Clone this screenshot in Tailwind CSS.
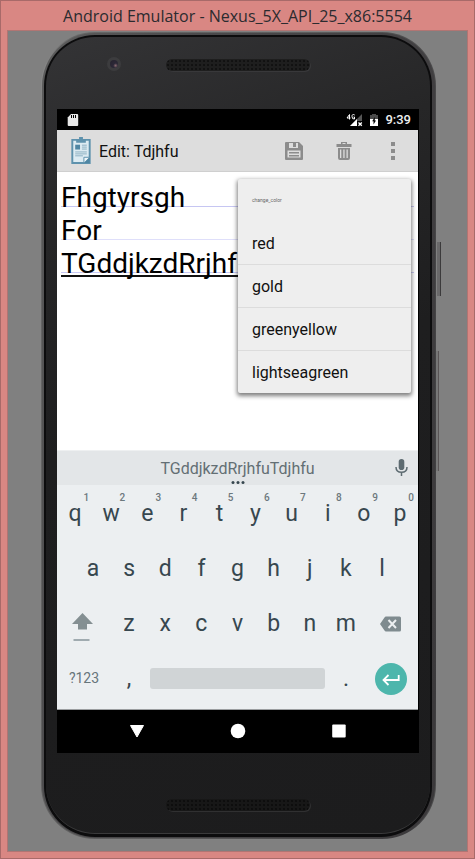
<!DOCTYPE html>
<html lang="en">
<head>
<meta charset="utf-8">
<meta name="viewport" content="width=device-width, initial-scale=1">
<title>Android Emulator - Nexus_5X_API_25_x86:5554</title>
<script src="https://cdn.jsdelivr.net/npm/@tailwindcss/browser@4"></script>
</head>
<body class="font-['Roboto',sans-serif]">
<div class="flex min-h-screen flex-col border border-[#a86a69] bg-[#d98783] px-[6px] pb-[6px]">
  <h1 class="h-[29px] pt-[2px] text-center font-['Open_Sans',sans-serif] text-[16px] leading-[26px] whitespace-nowrap text-[#2b2b2f]">Android Emulator - Nexus_5X_API_25_x86:5554</h1>
  <main class="flex flex-1 flex-col border border-[#b17573] bg-[#808080] pt-px pr-[31px] pb-[12px] pl-[33px]">
    <!-- Phone body -->
    <div class="relative flex flex-1 flex-col rounded-[54px] bg-[linear-gradient(100deg,#949494_0%,#666_6%,#5c5c5c_50%,#3c3b3d_95%,#555_100%)] p-px">
      <span class="absolute top-[210px] -right-[5px] h-[54px] w-[4px] border-r border-[#3b3a3b] bg-[#6a696a]"></span>
      <span class="absolute top-[319px] -right-[3px] h-[120px] w-[3px] border-r border-[#5a5556] bg-[#777]"></span>
      <div class="flex flex-1 flex-col rounded-[53px] bg-[linear-gradient(100deg,#5c5c5c_0%,#4a494b_30%,#3a383a_100%)] pt-[2px] pr-[3px] pb-px pl-[2px]">
      <div class="flex flex-1 flex-col rounded-[51px] bg-[#0c0c0d] pt-[2px] pr-[2px] pb-[3px] pl-[2px]">
      <div class="flex flex-1 flex-col rounded-[49px] border-b border-[#3a3a3b] bg-[linear-gradient(160deg,#343436_0%,#262627_22%,#1e1e1f_45%,#1c1c1d_100%)] pr-[11px] pl-[11px]">
        <div class="relative flex h-[72px] justify-center pt-[22px]">
          <span class="absolute top-[20px] left-[50px] flex size-[14px] items-center justify-center rounded-full bg-[#3c3c3e]"><span class="size-[8px] rounded-full bg-[radial-gradient(circle_at_70%_70%,#8a6a70_0,#2c2837_30%,#24212c_100%)]"></span></span>
          <span class="h-[12px] w-[144px] rounded-full bg-[#1e1e1e] bg-[radial-gradient(circle,#0a0a0a_0.5px,transparent_1px)] bg-size-[4px_4px] shadow-[1px_1px_0_#38383a]"></span>
        </div>
        <!-- Screen -->
        <div class="flex flex-1 flex-col bg-black pr-px">
          <header class="flex h-[21px] items-center pr-[7px] pl-[10px] text-white">
            <svg class="h-[14px] w-[12px]" viewBox="0 0 12 14" aria-hidden="true"><path fill="#e8e8e8" d="M4 1h6.2q1 0 1 1v10q0 1-1 1H1.700q-1 0-1-1V4.500z"/><path stroke="#000" d="M4.500 2v3M6.500 2v3M8.500 2v3"/></svg>
            <svg class="ml-auto h-[14px] w-[17px]" viewBox="0 0 17 14" aria-hidden="true"><path fill="#555" d="M16 1v12H4z"/><path fill="#fff" d="M11 6v7H4z"/><path fill="#000" d="M11 8h6v6h-6z"/><path stroke="#fff" stroke-width="1.300" d="m12.500 9.500 3.300 3.300m0-3.300-3.300 3.300"/><path fill="none" stroke="#fff" d="M3.500 6.500v-5l-2.500 3.500h3.500M8.700 2Q6 .5 6 3.500T8.500 6V4H7.500"/></svg>
            <svg class="ml-[6px] h-[14px] w-[10px]" viewBox="0 0 10 14" aria-hidden="true"><path fill="#4a4a4a" d="M1 2h2V1h4v1h2v4H1z"/><path fill="#fff" d="M1 6h8v7H1z"/><path fill="#000" d="M5.800 4v3.500H7L4.500 11.500V8.300H3.200z"/></svg>
            <span class="ml-[6px] text-[13px] leading-[20px] font-medium text-[#eee]">9:39</span>
          </header>
          <div class="flex h-[42px] items-center border-b border-[#cfcfcf] bg-[#dddddd] pl-[13px]">
            <svg class="h-[29px] w-[22px]" viewBox="0 0 22 30" aria-hidden="true"><path fill="#dcebf2" stroke="#5e92ad" stroke-width="2" d="M2 4h18v24H2z"/><path fill="#5e92ad" d="M6 3h3V1h4v2h3v4H6z"/><path fill="#4f86a3" d="M5 9h5v5H5z"/><path stroke="#8cb0c2" d="M12 9.500h5M12 11.500h5M12 13.500h5M5 16.500h12M5 18.500h12M5 20.500h8"/><path fill="#4f86a3" d="M20 22v6h-6z"/><path fill="#eef5f8" stroke="#5e92ad" d="M14 28v-6h6z"/></svg>
            <h2 class="ml-[7px] flex-1 pt-[2px] text-[16px] leading-[20px] text-[#111]">Edit: Tdjhfu</h2>
            <button class="flex h-[41px] w-[50px] items-center justify-center" aria-label="Save"><svg class="size-[18px]" viewBox="0 0 18 18"><path fill="#8c8c8c" fill-rule="evenodd" d="M1 0h13l4 4v13q0 1-1 1H1q-1 0-1-1V1q0-1 1-1zM4 1v5h9V1zM2.500 8.500V15.500h13V8.500z"/><path fill="#8c8c8c" d="M8 1h3v4H8zM4 10h10v1.500H4zM4 13h10v1.500H4z"/></svg></button>
            <button class="flex h-[41px] w-[49px] items-center justify-center" aria-label="Delete"><svg class="h-[18px] w-[16px]" viewBox="0 0 16 18"><path fill="#8c8c8c" fill-rule="evenodd" d="M5 0h6v2h4.500v3H.5V2H5zm1.500 1v1h3V1zM2 6h12v10q0 2-2 2H4q-2 0-2-2zm2 1.500v8.500h1.300V7.500zm3.300 0V16h1.300V7.500zm3.200 0V16h1.300V7.500z"/></svg></button>
            <button class="flex h-[41px] w-[50px] items-center justify-center" aria-label="More options"><svg class="h-[18px] w-[4px]" viewBox="0 0 4 18"><path fill="#8c8c8c" d="M0 0h4v4H0zM0 7h4v4H0zM0 14h4v4H0z"/></svg></button>
          </div>
          <!-- Note being edited -->
          <div class="relative flex min-h-[278px] flex-1 flex-col bg-white px-[4px] pt-[2px]">
            <div class="absolute inset-x-[4px] top-[2px] flex flex-col" aria-hidden="true">
              <span class="h-[33px] border-b border-[#c6c6f2]"></span>
              <span class="h-[33px] border-b border-[#dfdffa]"></span>
              <span class="h-[33px] border-b border-[#c9c9f4]"></span>
              <span class="mt-[2px] mr-[160px] h-[2px] bg-[#111]"></span>
            </div>
            <textarea aria-label="Note" spellcheck="false" class="relative block w-full flex-1 resize-none overflow-hidden bg-transparent pt-[7px] text-[28px] leading-[33px] text-black outline-none">Fhgtyrsgh
For
TGddjkzdRrjhfu</textarea>
            <div role="menu" aria-label="change_color" class="absolute top-[7px] right-[7px] w-[173px] rounded-[2px] bg-[#eeeeee] text-[16px] leading-[20px] text-[#111] shadow-[0_2px_4px_1px_rgba(0,0,0,0.5)]">
              <p class="h-[43px] px-[14px] text-[5px] leading-[43px] text-[#666]">change_color</p>
              <button role="menuitem" class="block h-[43px] w-full border-b border-[#dcdcdc] px-[14px] pt-[2px] text-left">red</button>
              <button role="menuitem" class="block h-[43px] w-full border-b border-[#dcdcdc] px-[14px] pt-[2px] text-left">gold</button>
              <button role="menuitem" class="block h-[43px] w-full border-b border-[#dcdcdc] px-[14px] pt-[2px] text-left">greenyellow</button>
              <button role="menuitem" class="block h-[42px] w-full px-[14px] pt-[2px] text-left">lightseagreen</button>
            </div>
          </div>
          <!-- Keyboard -->
          <div class="border-b border-[#9b9ea0] bg-[#eceff1] text-[#37474f]">
            <div class="relative mb-px flex h-[35px] items-center justify-center border-t border-[#eef0f1] bg-[#e3e6e8]">
              <button class="pt-[2px] text-[16px] leading-[20px] text-[#636f74]">TGddjkzdRrjhfuTdjhfu</button>
              <span class="absolute bottom-px left-1/2 flex -translate-x-1/2 gap-[2px]"><i class="size-[3px] rounded-full bg-[#37474f]"></i><i class="size-[3px] rounded-full bg-[#37474f]"></i><i class="size-[3px] rounded-full bg-[#37474f]"></i></span>
              <button class="absolute top-[8px] right-[10px]" aria-label="Voice input"><svg class="h-[18px] w-[13px]" viewBox="0 0 13 18"><rect x="3.700" y="0" width="5.600" height="11" rx="2.800" fill="#5d6b71"/><path fill="none" stroke="#5d6b71" stroke-width="1.500" d="M1 8q0 5.300 5.500 5.300T12 8M6.500 13v4"/></svg></button>
            </div>
            <div class="flex h-[55px] text-[23px] leading-[55px]">
              <button class="relative flex-1">q<sup class="absolute top-[6px] right-[4px] text-[10px] leading-[12px] font-medium text-[#6c787d]">1</sup></button>
              <button class="relative flex-1">w<sup class="absolute top-[6px] right-[4px] text-[10px] leading-[12px] font-medium text-[#6c787d]">2</sup></button>
              <button class="relative flex-1">e<sup class="absolute top-[6px] right-[4px] text-[10px] leading-[12px] font-medium text-[#6c787d]">3</sup></button>
              <button class="relative flex-1">r<sup class="absolute top-[6px] right-[4px] text-[10px] leading-[12px] font-medium text-[#6c787d]">4</sup></button>
              <button class="relative flex-1">t<sup class="absolute top-[6px] right-[4px] text-[10px] leading-[12px] font-medium text-[#6c787d]">5</sup></button>
              <button class="relative flex-1">y<sup class="absolute top-[6px] right-[4px] text-[10px] leading-[12px] font-medium text-[#6c787d]">6</sup></button>
              <button class="relative flex-1">u<sup class="absolute top-[6px] right-[4px] text-[10px] leading-[12px] font-medium text-[#6c787d]">7</sup></button>
              <button class="relative flex-1">i<sup class="absolute top-[6px] right-[4px] text-[10px] leading-[12px] font-medium text-[#6c787d]">8</sup></button>
              <button class="relative flex-1">o<sup class="absolute top-[6px] right-[4px] text-[10px] leading-[12px] font-medium text-[#6c787d]">9</sup></button>
              <button class="relative flex-1">p<sup class="absolute top-[6px] right-[4px] text-[10px] leading-[12px] font-medium text-[#6c787d]">0</sup></button>
            </div>
            <div class="flex h-[55px] px-[18px] text-[23px] leading-[55px]">
              <button class="flex-1">a</button><button class="flex-1">s</button><button class="flex-1">d</button><button class="flex-1">f</button><button class="flex-1">g</button><button class="flex-1">h</button><button class="flex-1">j</button><button class="flex-1">k</button><button class="flex-1">l</button>
            </div>
            <div class="flex h-[55px] text-[23px] leading-[55px]">
              <button class="flex w-[54px] items-center pl-[15px]" aria-label="Shift"><svg class="mt-[8px] h-[29px] w-[21px]" viewBox="0 0 21 29"><path fill="#848f92" d="m10.500 0 10.500 11h-6v5.500H6V11H0z"/><path stroke="#87959a" stroke-width="1.500" d="M1.500 27h16"/></svg></button>
              <button class="flex-1">z</button><button class="flex-1">x</button><button class="flex-1">c</button><button class="flex-1">v</button><button class="flex-1">b</button><button class="flex-1">n</button><button class="flex-1">m</button>
              <button class="flex w-[54px] items-center justify-center" aria-label="Backspace"><svg class="h-[16px] w-[21px]" viewBox="0 0 21 16"><path fill="#7f8b8f" d="M6 .5h13.500q1.500 0 1.500 1.500v12q0 1.500-1.500 1.500H6Q5 15.500 4.500 14.500L0 8l4.500-6.500Q5 .5 6 .5z"/><path stroke="#eceff1" stroke-width="2" d="m8.500 4 7.500 8m0-8-7.500 8"/></svg></button>
            </div>
            <div class="flex h-[58px] pb-[3px] text-[23px] leading-[55px]">
              <button class="w-[54px] text-[14px] text-[#67757b]">?123</button>
              <button class="w-[36px]">,</button>
              <button class="flex flex-1 items-center px-[3px]" aria-label="Space"><span class="h-[21px] w-full rounded-[3px] bg-[#d0d4d6]"></span></button>
              <button class="w-[36px]">.</button>
              <button class="flex w-[54px] items-center justify-center" aria-label="Enter"><svg class="size-[32px]" viewBox="0 0 32 32"><circle cx="16" cy="16" r="16" fill="#4db6ac"/><path fill="none" stroke="#fff" stroke-width="1.800" d="M23.700 12v5H9M13.500 12 8.500 17l5 5"/></svg></button>
            </div>
          </div>
          <nav class="flex h-[43px] items-center justify-center pb-[2px]">
            <button class="flex w-[101px] justify-center" aria-label="Back"><svg class="size-[16px]" viewBox="0 0 16 16"><path fill="#fff" stroke="#fff" stroke-linejoin="round" d="M1.500 2.500h13L8 14z"/></svg></button>
            <button class="flex w-[101px] justify-center" aria-label="Home"><svg class="size-[16px]" viewBox="0 0 16 16"><circle cx="8" cy="8" r="7.300" fill="#fff"/></svg></button>
            <button class="flex w-[101px] justify-center" aria-label="Recent apps"><svg class="size-[16px]" viewBox="0 0 16 16"><rect x="1.200" y="1.500" width="13.500" height="13" rx="1" fill="#fff"/></svg></button>
          </nav>
        </div>
        <div class="flex h-[80px] items-center justify-center pt-[24px]">
          <span class="h-[12px] w-[144px] rounded-full bg-[#171717] bg-[radial-gradient(circle,#060606_0.5px,transparent_1px)] bg-size-[4px_4px] shadow-[1px_1px_0_#303031]"></span>
        </div>
      </div>
      </div>
      </div>
    </div>
  </main>
</div>
</body>
</html>
